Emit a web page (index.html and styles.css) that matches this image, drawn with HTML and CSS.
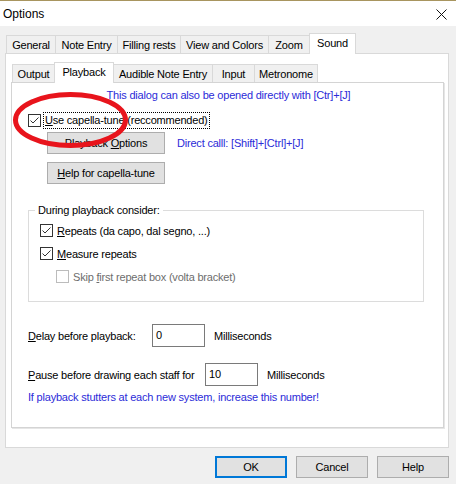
FILE: index.html
```html
<!DOCTYPE html>
<html lang="en">
<head>
    <meta charset="UTF-8">
    <title>Options</title>
    <link rel="stylesheet" href="styles.css">
</head>
<body>

    <div class="titlebar">
        <span class="title">Options</span>
        <svg class="close" width="11" height="11" viewBox="0 0 11 11">
            <path d="M0.5 0.5 L10.5 10.5 M10.5 0.5 L0.5 10.5" stroke="#111" stroke-width="1" fill="none"/>
        </svg>
    </div>

    <div class="dialog">
        <div class="tabs">
            <div class="tab t-general">General</div>
            <div class="tab t-note">Note Entry</div>
            <div class="tab t-rests">Filling rests</div>
            <div class="tab t-view">View and Colors</div>
            <div class="tab t-zoom">Zoom</div>
            <div class="tab active t-sound">Sound</div>
        </div>

        <div class="panel">
            <div class="tabs sub">
                <div class="tab t-output">Output</div>
                <div class="tab active t-playback">Playback</div>
                <div class="tab t-audible">Audible Note Entry</div>
                <div class="tab t-input">Input</div>
                <div class="tab t-metro">Metronome</div>
            </div>

            <div class="page">
                <p class="hint top-hint">This dialog can also be opened directly with [Ctr]+[J]</p>

                <div class="check main-check">
                    <span class="box checked"></span>
                    <span class="focus"><u>U</u>se capella-tune (reccommended)</span>
                </div>

                <div class="btn-row">
                    <button class="btn wide">Playback <u>O</u>ptions</button>
                    <span class="hint">Direct calll: [Shift]+[Ctrl]+[J]</span>
                </div>
                <div class="btn-row second">
                    <button class="btn wide"><u>H</u>elp for capella-tune</button>
                </div>

                <fieldset class="group">
                    <legend>During playback consider:</legend>
                    <div class="check">
                        <span class="box checked"></span>
                        <span><u>R</u>epeats (da capo, dal segno, ...)</span>
                    </div>
                    <div class="check">
                        <span class="box checked"></span>
                        <span><u>M</u>easure repeats</span>
                    </div>
                    <div class="check sub-check disabled">
                        <span class="box"></span>
                        <span>Skip <u>f</u>irst repeat box (volta bracket)</span>
                    </div>
                </fieldset>

                <div class="field delay">
                    <span class="field-label"><u>D</u>elay before playback:</span>
                    <span class="num">0</span>
                    <span>Milliseconds</span>
                </div>
                <div class="field pause">
                    <span class="field-label"><u>P</u>ause before drawing each staff for</span>
                    <span class="num">10</span>
                    <span>Milliseconds</span>
                </div>
                <p class="hint bottom-hint">If playback stutters at each new system, increase this number!</p>

                <!-- red marker round the capella-tune option -->
                <svg class="marker" width="130" height="70" viewBox="0 0 130 70">
                    <ellipse cx="58.5" cy="37" rx="55" ry="25.5" fill="none" stroke="#e8141c" stroke-width="5"/>
                </svg>
            </div>
        </div>

        <div class="footer">
            <button class="btn default">OK</button>
            <button class="btn">Cancel</button>
            <button class="btn">Help</button>
        </div>
    </div>

</body>
</html>
```

FILE: styles.css
```css
body {
    margin: 0;
    width: 456px;
    height: 484px;
    overflow: hidden;
    background: #f0f0f0;
    font-family: "Liberation Sans", Arial, sans-serif;
    font-size: 11px;
    letter-spacing: -0.2px;
    color: #000;
}
.titlebar {
    height: 25px;
    border-top: 1px solid #a8955f;
    background: #fff;
    display: flex;
    align-items: center;
    justify-content: space-between;
    padding: 0 9px 0 3px;
}
.title {
    font-size: 12px;
    letter-spacing: 0;
    margin-top: 1px;
}
.close {
    margin-top: 2px;
}
.dialog {
    padding: 7px 0 0 5px;
}
.tabs {
    display: flex;
    align-items: flex-end;
    height: 20px;
    padding-left: 1px;
    position: relative;
    z-index: 1;
}
.tab {
    box-sizing: border-box;
    height: 18px;
    border: 1px solid #d9d9d9;
    border-bottom: none;
    margin-left: -1px;
    background: #f0f0f0;
    display: flex;
    align-items: center;
    justify-content: center;
    padding-top: 1px;
}
.tab:first-child {
    margin-left: 0;
}
.tab.active {
    height: 21px;
    background: #fff;
    margin-bottom: -1px;
    padding-top: 0;
    padding-bottom: 2px;
}
.t-general { width: 50px; }
.t-note { width: 63px; }
.t-rests { width: 64px; }
.t-view { width: 89px; }
.t-zoom { width: 42px; }
.t-sound { width: 47px; }
.t-output { width: 43px; }
.t-playback { width: 60px; }
.t-audible { width: 100px; }
.t-input { width: 43px; }
.t-metro { width: 64px; }

.panel {
    box-sizing: border-box;
    width: 444px;
    height: 395px;
    border: 1px solid #d9d9d9;
    background: #fff;
    padding: 8px 0 0 5px;
}
.sub {
    height: 20px;
}
.page {
    position: relative;
    box-sizing: border-box;
    width: 433px;
    height: 346px;
    border: 1px solid #d4d4d4;
    box-shadow: 1px 1px 0 #e6e6e6;
    background: #fff;
}
.hint {
    color: #2b2bd8;
    margin: 0;
}
.top-hint {
    text-align: center;
    line-height: 13px;
    margin-top: 6px;
    padding-left: 2px;
}
.check {
    display: flex;
    align-items: center;
    height: 18px;
}
.main-check {
    margin: 9px 0 0 16px;
}
.box {
    box-sizing: border-box;
    width: 13px;
    height: 13px;
    border: 1px solid #333;
    background: #fff;
    margin-right: 4px;
}
.box.checked {
    background: #fff url("data:image/svg+xml;utf8,<svg xmlns='http://www.w3.org/2000/svg' width='11' height='11'><polyline points='1.5,5.5 4,8 9.5,2.5' fill='none' stroke='%23333' stroke-width='1'/></svg>") no-repeat center;
}
.focus {
    border: 1px dotted #000;
    padding: 1px 1px;
    margin-left: -2px;
    line-height: 13px;
}
.btn-row {
    display: flex;
    align-items: center;
    margin: 3px 0 0 35px;
}
.btn-row.second {
    margin-top: 8px;
}
.btn {
    box-sizing: border-box;
    width: 72px;
    height: 22px;
    border: 1px solid #adadad;
    background: #e1e1e1;
    font-family: inherit;
    font-size: 11px;
    letter-spacing: -0.2px;
    color: #000;
    padding: 0;
}
.btn.wide {
    width: 118px;
    margin-right: 12px;
}
.group {
    box-sizing: border-box;
    width: 396px;
    height: 98px;
    margin: 20px 0 0 16px;
    border: 1px solid #dcdcdc;
    padding: 3px 0 0 11px;
}
.group legend {
    padding: 0 3px;
    margin-left: -5px;
}
.group .check {
    height: 23px;
}
.group .sub-check {
    margin-left: 16px;
}
.disabled {
    color: #6d6d6d;
}
.disabled .box {
    border-color: #bcbcbc;
}
.field {
    display: flex;
    align-items: center;
    margin-left: 16px;
}
.delay {
    margin-top: 22px;
}
.pause {
    margin-top: 16px;
}
.field-label {
    width: 124px;
}
.pause .field-label {
    width: 177px;
}
.num {
    box-sizing: border-box;
    width: 53px;
    height: 23px;
    border: 1px solid #7a7a7a;
    padding: 4px 0 0 3px;
    margin-right: 9px;
}
.bottom-hint {
    margin: 5px 0 0 16px;
}
.marker {
    position: absolute;
    left: 0;
    top: 0;
    overflow: visible;
}
.footer {
    display: flex;
    justify-content: flex-end;
    gap: 9px;
    margin-top: 8px;
    padding-right: 7px;
}
.btn.default {
    border: 2px solid #0078d7;
}
```
